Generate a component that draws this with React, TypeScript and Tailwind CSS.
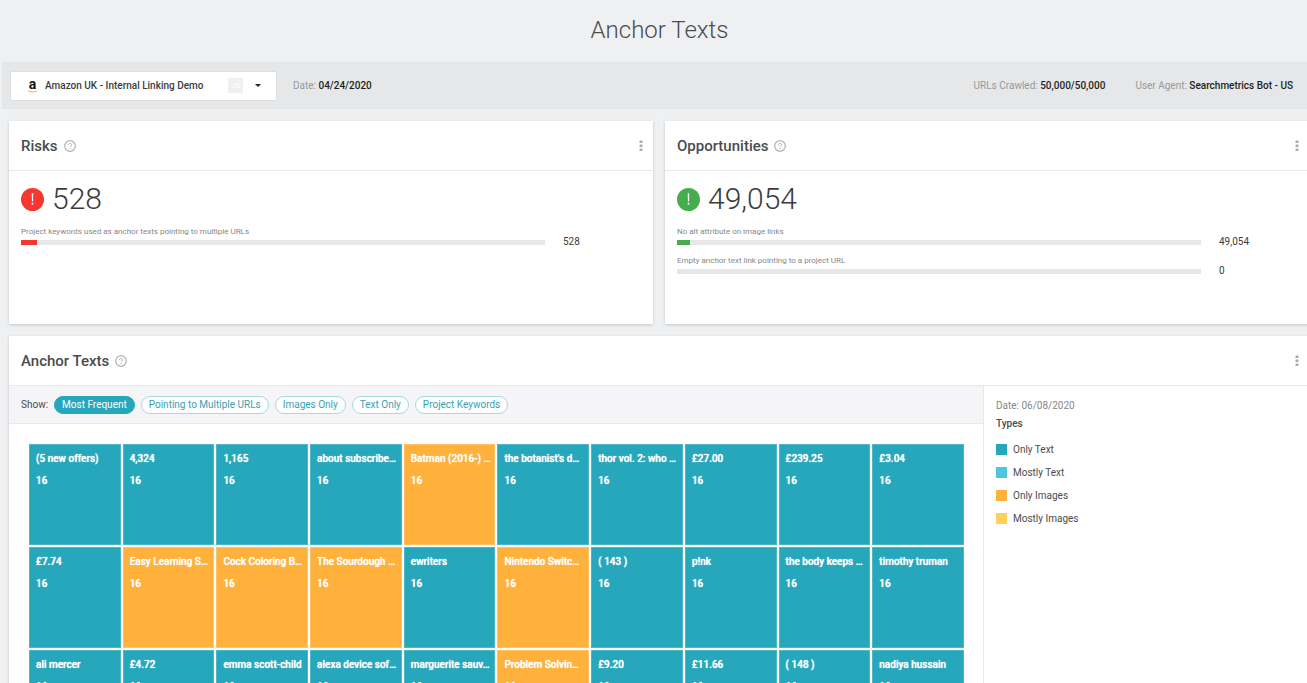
import { useState } from "react"
import { clsx } from "clsx"

type Metric = {
  label: string
  value: string
  percent: number
}

type Tile = {
  text: string
  image?: boolean
}

const risks: Metric[] = [
  { label: "Project keywords used as anchor texts pointing to multiple URLs", value: "528", percent: 3 },
]

const opportunities: Metric[] = [
  { label: "No alt attribute on image links", value: "49,054", percent: 2.5 },
  { label: "Empty anchor text link pointing to a project URL", value: "0", percent: 0 },
]

const filters = ["Most Frequent", "Pointing to Multiple URLs", "Images Only", "Text Only", "Project Keywords"]

const tiles: Tile[] = [
  { text: "(5 new offers)" },
  { text: "4,324" },
  { text: "1,165" },
  { text: "about subscribe…" },
  { text: "Batman (2016-) …", image: true },
  { text: "the botanist's d…" },
  { text: "thor vol. 2: who …" },
  { text: "£27.00" },
  { text: "£239.25" },
  { text: "£3.04" },
  { text: "£7.74" },
  { text: "Easy Learning S…", image: true },
  { text: "Cock Coloring B…", image: true },
  { text: "The Sourdough …", image: true },
  { text: "ewriters" },
  { text: "Nintendo Switc…", image: true },
  { text: "( 143 )" },
  { text: "p!nk" },
  { text: "the body keeps …" },
  { text: "timothy truman" },
  { text: "ali mercer" },
  { text: "£4.72" },
  { text: "emma scott-child" },
  { text: "alexa device sof…" },
  { text: "marguerite sauv…" },
  { text: "Problem Solvin…", image: true },
  { text: "£9.20" },
  { text: "£11.66" },
  { text: "( 148 )" },
  { text: "nadiya hussain" },
]

const legend = [
  { label: "Only Text", color: "bg-[#27a7bb]" },
  { label: "Mostly Text", color: "bg-[#4fc6da]" },
  { label: "Only Images", color: "bg-[#ffb13b]" },
  { label: "Mostly Images", color: "bg-[#ffd05a]" },
]

function CardHeader({ title }: { title: string }) {
  return (
    <header className="flex h-[50px] items-center border-b border-[#e8e9eb] pl-3 pr-2.5">
      <h2 className="text-[15px] leading-5 font-medium text-[#4a4c4e]">{title}</h2>
      <button aria-label={`About ${title}`} className="ml-1.5">
        <svg viewBox="0 0 12 12" className="size-3" fill="none" stroke="#b0b2b4">
          <circle cx="6" cy="6" r="5.3" strokeWidth="1.2" />
          <path d="M4.4 5c0-2.3 3.2-2.3 3.2 0 0 1-1.6 1-1.6 2.1M6 8v1.1" />
        </svg>
      </button>
      <button aria-label={`${title} menu`} className="ml-auto flex h-6 w-1 items-center justify-center">
        <svg viewBox="0 0 4 12" className="h-3 w-1" fill="#a9abad">
          <rect x="0.5" y="0.5" width="3" height="2.6" rx="0.5" />
          <rect x="0.5" y="4.5" width="3" height="2.6" rx="0.5" />
          <rect x="0.5" y="8.5" width="3" height="2.6" rx="0.5" />
        </svg>
      </button>
    </header>
  )
}

function MetricCard({ title, total, metrics, color }: { title: string; total: string; metrics: Metric[]; color: string }) {
  return (
    <section className="min-h-[203px] bg-white shadow-[0_1px_3px_#0000002e]">
      <CardHeader title={title} />
      <div className="px-3 pt-3">
        <div className="flex h-8 items-center gap-2">
          <span className={clsx("flex size-[23px] items-center justify-center rounded-full", color)}>
            <svg viewBox="0 0 24 24" className="size-[23px]" fill="white">
              <path d="M11.2 5.5h1.6l-.2 8.5h-1.2z" />
              <rect x="11.2" y="15.5" width="1.6" height="1.8" />
            </svg>
          </span>
          <strong className="text-[30px] leading-8 font-light text-[#3a3c3e]">{total}</strong>
        </div>
        <ul className="pt-[11px]">
          {metrics.map((m) => (
            <li key={m.label} className="h-[29px]">
              <p className="text-[8px] leading-3 text-[#85878a]">{m.label}</p>
              <div className="flex h-2 items-center">
                <div className="h-[5px] flex-1 bg-[#e6e7e9]">
                  <div className={clsx("h-full", color)} style={{ width: `${m.percent}%` }} />
                </div>
                <span className="w-24 pl-[18px] text-[10px] leading-3 text-[#3a3c3e]">{m.value}</span>
              </div>
            </li>
          ))}
        </ul>
      </div>
    </section>
  )
}

export default function App() {
  const [filter, setFilter] = useState("Most Frequent")

  return (
    <div className="min-h-screen overflow-hidden bg-[#eff0f2] font-[Roboto,sans-serif] text-[#4a4c4e]">
      <h1 className="pt-3 pb-[14px] pl-3 text-center text-[24px] leading-9 font-light text-[#4a4c4e]">Anchor Texts</h1>

      <div className="ml-0.5 flex h-[47px] items-center bg-[#e6e7e9] pr-[14px] pl-2 text-[10px] text-[#97999b]">
        <div className="relative text-[#3a3c3e]">
          <select
            aria-label="Project"
            className="h-[30px] w-[267px] appearance-none rounded-xs border border-[#dcdee0] bg-white pr-16 pl-[34px] text-[10px] font-medium"
          >
            <option>Amazon UK - Internal Linking Demo</option>
          </select>
          <div className="pointer-events-none absolute inset-0 flex items-center px-4">
            <svg viewBox="0 0 12 16" className="h-4 w-3 overflow-visible">
              <text x="6.5" y="11" textAnchor="middle" fontSize="14" fontWeight="700" fill="#111">a</text>
              <path d="M2 13q4.5 2 9 0" fill="none" stroke="#f9b45a" strokeWidth="1.2" />
            </svg>
            <span className="ml-auto flex size-[15px] items-center justify-center bg-[#eff0f2] text-[8px] leading-3 text-white">JS</span>
            <svg viewBox="0 0 6 3" className="ml-3 h-[3px] w-1.5" fill="#222">
              <path d="M0 0h6L3 3z" />
            </svg>
          </div>
        </div>
        <p className="ml-4">Date: <b className="font-medium text-[#1d1f21]">04/24/2020</b></p>
        <p className="ml-auto">URLs Crawled: <b className="font-medium text-[#1d1f21]">50,000/50,000</b></p>
        <p className="ml-[30px]">User Agent: <b className="font-medium text-[#1d1f21]">Searchmetrics Bot - US</b></p>
      </div>

      <main className="-mr-0.5 flex flex-col gap-3 pt-3 pl-[9px]">
        <div className="grid grid-cols-2 gap-3">
          <MetricCard title="Risks" total="528" metrics={risks} color="bg-[#f6372f]" />
          <MetricCard title="Opportunities" total="49,054" metrics={opportunities} color="bg-[#46ad4c]" />
        </div>

        <section className="bg-white shadow-[0_1px_3px_#0000002e]">
          <CardHeader title="Anchor Texts" />
          <div className="grid grid-cols-[3fr_1fr]">
            <div className="min-w-0 border-r border-[#e8e9eb]">
              <div className="flex h-[38px] items-center gap-1.5 border-b border-[#e8e9eb] bg-[#f5f5f7] px-3 text-[10px]">
                <span>Show:</span>
                {filters.map((f) => (
                  <button
                    key={f}
                    onClick={() => setFilter(f)}
                    className={clsx(
                      "h-[18px] rounded-full border px-[7px]",
                      f === filter ? "border-[#27a7bb] bg-[#27a7bb] text-white" : "border-[#a5dae2] bg-white text-[#3a9fb0]"
                    )}
                  >
                    {f}
                  </button>
                ))}
              </div>
              <ul className="grid grid-cols-10 gap-0.5 p-5 pr-[19px] text-[10px] font-medium text-white [text-shadow:0_0_1px_#fff]">
                {tiles.map((t) => (
                  <li
                    key={t.text}
                    className={clsx(
                      "h-[101px] min-w-0 border px-1.5 pt-[7px] whitespace-nowrap",
                      t.image ? "border-[#ffc265] bg-[#ffb13b]" : "border-[#4cb7c7] bg-[#27a7bb]"
                    )}
                  >
                    <p className="leading-[14px]">{t.text}</p>
                    <p className="mt-2 leading-[14px]">16</p>
                  </li>
                ))}
              </ul>
            </div>
            <aside className="px-3 pt-3 text-[10px]">
              <p className="leading-4 text-[#85878a]">Date: 06/08/2020</p>
              <h3 className="mt-0.5 leading-4 font-medium">Types</h3>
              <ul className="mt-1.5">
                {legend.map((l) => (
                  <li key={l.label} className="flex h-[23px] items-center gap-1.5">
                    <span className={clsx("size-[11px]", l.color)} />
                    {l.label}
                  </li>
                ))}
              </ul>
            </aside>
          </div>
        </section>
      </main>
    </div>
  )
}
